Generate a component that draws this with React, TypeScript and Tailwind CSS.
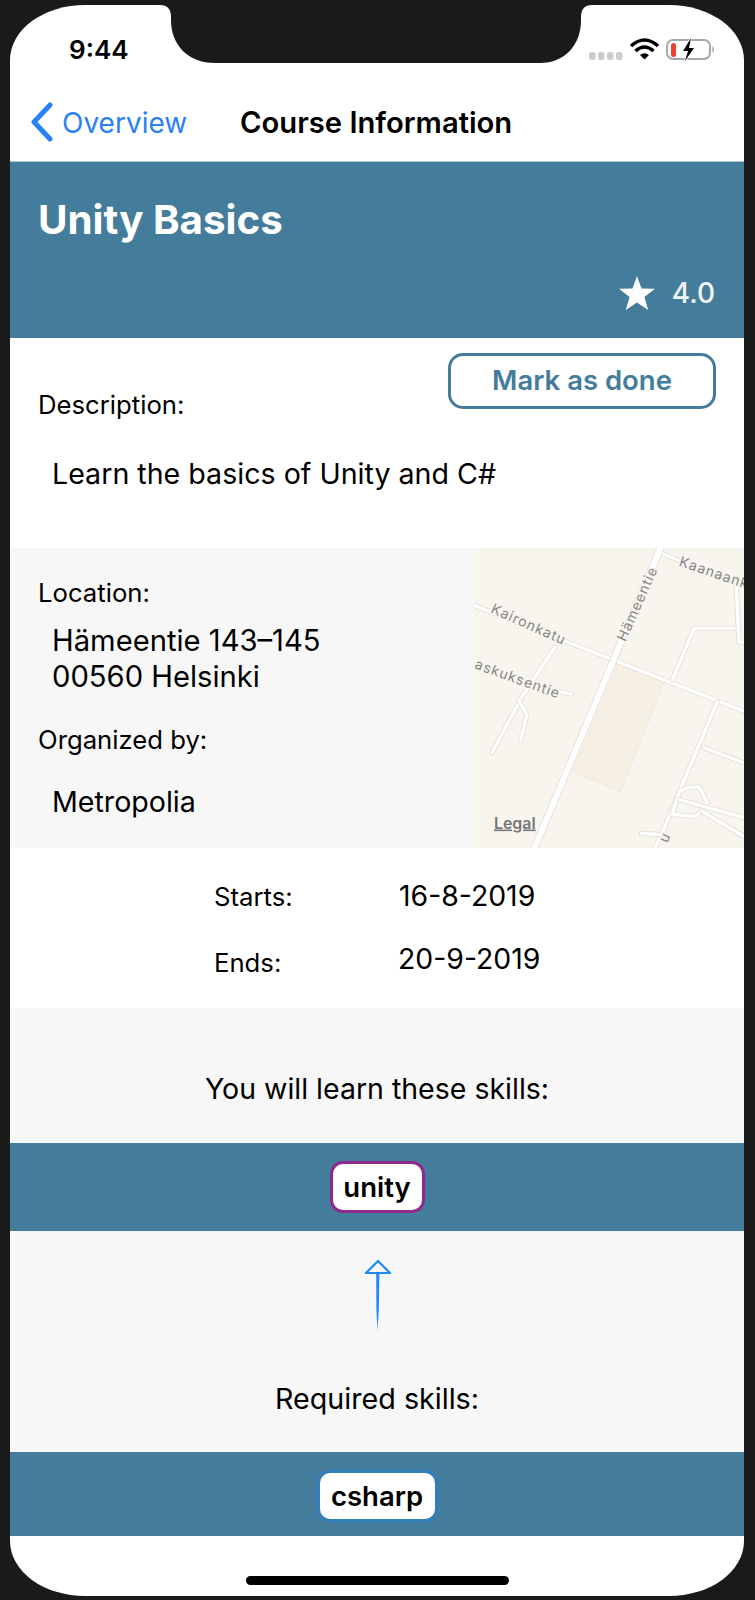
function StatusIcons() {
  return (
    <svg width="135" height="30" viewBox="0 0 135 30" className="absolute left-[575px] top-[30px]">
      {[4, 13, 22, 31].map((x) => (
        <rect key={x} x={x} y="17" width="6.5" height="8" rx="2.5" fill="#cccccc" />
      ))}
      <path d="M46 11 Q59.5 -1 73 11" fill="none" stroke="#000" strokeWidth="3.5" />
      <path d="M50.5 16 Q59.5 8 68.5 16" fill="none" stroke="#000" strokeWidth="3.5" />
      <path d="M55 20 L59.5 24.5 L64 20 Q59.5 16.5 55 20 Z" fill="#000" />
      <rect x="82" y="5" width="43" height="19" rx="6" fill="none" stroke="#a8a8a8" strokeWidth="2" />
      <rect x="86" y="8" width="5" height="14" rx="2.5" fill="#f0402f" />
      <path d="M106 3 L98 16 L103 16 L100 26 L109 13 L104 13 Z" fill="#000" stroke="#fff" strokeWidth="1.5" paintOrder="stroke" />
      <path d="M127.5 11 Q130.5 14.5 127.5 18 Z" fill="#999" />
    </svg>
  );
}

function Notch() {
  return (
    <svg width="735" height="60" viewBox="0 0 735 60" className="absolute left-0 top-0">
      <path
        d="M150 0 Q161 0 161 12 L161 15 C161 40 178 58 205 58 L530 58 C555 58 571 40 571 15 L571 12 Q571 0 582 0 Z"
        fill="#1a1a1a"
      />
    </svg>
  );
}

function Road({ d, w = 3.5 }: { d: string; w?: number }) {
  return (
    <g fill="none" strokeLinecap="round" strokeLinejoin="round">
      <path d={d} stroke="#e0dcd4" strokeWidth={w + 1.5} />
      <path d={d} stroke="#ffffff" strokeWidth={w} />
    </g>
  );
}

function MapLabel({ x, y, angle, text }: { x: number; y: number; angle: number; text: string }) {
  return (
    <text
      transform={`translate(${x} ${y}) rotate(${angle})`}
      fontSize="14"
      letterSpacing="1"
      fill="#858585"
      stroke="#f8f5ef"
      strokeWidth="2.5"
      paintOrder="stroke"
      style={{ fontFamily: "Inter, sans-serif" }}
    >
      {text}
    </text>
  );
}

function MapTile() {
  return (
    <svg viewBox="0 0 271 300" className="w-[270px] h-full shrink-0 bg-[#f8f5ef]">
      <polygon points="145,114 191,134 147,244 99,224" fill="#f5efe3" stroke="#efe9dc" />
      <Road d="M0 57 L270 163" />
      <Road d="M189 5 L206 12" />
      <Road d="M199 132 L221 80 L264 80" />
      <Road d="M263 34 L266 94 L271 94" />
      <Road d="M244 154 L189 285 L182 300" />
      <Road d="M231 200 L271 215" />
      <Road d="M199 267 L206 244 L213 240 L226 239 L234 255 L223 269 Z" />
      <Road d="M206 252 L271 270" />
      <Road d="M229 264 L271 289" />
      <Road d="M168 286 L189 287" />
      <Road d="M81 99 L48 149 L18 205" />
      <Road d="M45 152 L53 167 L47 192" />
      <Road d="M86 144 L98 146" />
      <Road d="M187 0 L61 300" w={6} />
      <MapLabel x={16} y={64} angle={24} text="Kaironkatu" />
      <MapLabel x={152} y={94} angle={-66} text="Hämeentie" />
      <MapLabel x={0} y={120} angle={20} text="askuksentie" />
      <MapLabel x={205} y={17} angle={19} text="Kaanaank" />
      <MapLabel x={194} y={296} angle={-66} text="u" />
      <text
        x="20"
        y="281"
        fontSize="16"
        fontWeight="600"
        fill="#777777"
        textDecoration="underline"
        style={{ fontFamily: "Inter, sans-serif" }}
      >
        Legal
      </text>
    </svg>
  );
}

function SkillBar({ label, pill, h }: { label: string; pill: string; h: string }) {
  return (
    <div className={`${h} shrink-0 bg-[#447c9b] flex items-center justify-center`}>
      <div className={`${pill} h-[52px] border-[3px] rounded-[13px] bg-white flex items-center justify-center text-[27.5px] font-semibold text-black`}>
        {label}
      </div>
    </div>
  );
}

export default function App() {
  return (
    <div className="w-[755px] h-[1600px] bg-[#1a1a1a] pl-[10px] pr-[11px] pt-[5px] pb-[4px] font-['Inter',sans-serif] text-black">
      <div className="relative h-full bg-white rounded-[75px/55px] overflow-hidden flex flex-col">
        <Notch />
        <StatusIcons />
        <div className="absolute left-[59px] top-[27px] text-[26px] leading-[36px] font-semibold">9:44</div>

        {/* nav bar */}
        <div className="h-[157px] shrink-0 flex items-end pb-[19px] pl-[20px] border-b border-[#b9c4ca]">
          <svg width="24" height="40" viewBox="0 0 24 40">
            <path d="M20 3 L4 20 L20 37" fill="none" stroke="#2a80f5" strokeWidth="5" strokeLinecap="round" strokeLinejoin="round" />
          </svg>
          <span className="ml-[8px] w-[178px] text-[28px] leading-[38px] text-[#2a80f5]">Overview</span>
          <span className="text-[29.2px] leading-[38px] font-semibold">Course Information</span>
        </div>

        {/* title */}
        <div className="h-[176px] shrink-0 bg-[#447c9b] flex flex-col justify-between pl-[28px] pr-[29px] pt-[33px] pb-[27px] text-white">
          <h1 className="text-[40.3px] leading-[50px] font-bold">Unity Basics</h1>
          <div className="flex items-center justify-end gap-[17px]">
            <svg width="36" height="34" viewBox="0 0 36 34">
              <path d="M18 0 L22.5 12.5 L36 12.8 L25.4 21 L29.2 34 L18 26.4 L6.8 34 L10.6 21 L0 12.8 L13.5 12.5 Z" fill="#fff" />
            </svg>
            <span className="text-[28px] leading-[36px] font-medium text-[#f0f4f7]">4.0</span>
          </div>
        </div>

        {/* description */}
        <div className="h-[210px] shrink-0 pl-[28px] pr-[28px] pt-[15px]">
          <div className="flex justify-between items-start">
            <span className="mt-[36px] text-[25.7px] leading-[32px]">Description:</span>
            <button className="w-[268px] h-[56px] border-[3px] border-[#447c9b] rounded-[15px] text-[27.5px] font-semibold text-[#447c9b]">
              Mark as done
            </button>
          </div>
          <p className="ml-[14px] mt-[33px] text-[28.6px] leading-[40px]">Learn the basics of Unity and C#</p>
        </div>

        {/* location */}
        <div className="h-[300px] shrink-0 bg-[#f7f7f7] flex">
          <div className="flex-1 pl-[28px] pt-[29px]">
            <div className="text-[25.7px] leading-[32px]">Location:</div>
            <div className="ml-[14px] mt-[14px] text-[29.2px] leading-[36px]">
              Hämeentie 143–145
              <br />
              00560 Helsinki
            </div>
            <div className="mt-[29px] text-[25.7px] leading-[32px]">Organized by:</div>
            <div className="ml-[14px] mt-[28px] text-[28.6px] leading-[36px]">Metropolia</div>
          </div>
          <MapTile />
        </div>

        {/* dates */}
        <div className="h-[160px] shrink-0 pl-[204px] pt-[29px]">
          <div className="flex items-center h-[40px]">
            <span className="w-[185px] text-[25.7px]">Starts:</span>
            <span className="text-[28.4px] -mt-[2px]">16-8-2019</span>
          </div>
          <div className="flex items-center h-[40px] mt-[26px]">
            <span className="w-[184px] text-[25.7px]">Ends:</span>
            <span className="text-[28.4px] -mt-[8px]">20-9-2019</span>
          </div>
        </div>

        {/* skills */}
        <div className="h-[135px] shrink-0 bg-[#f7f7f7] flex items-start justify-center pt-[61px] text-[28.5px] leading-[40px]">
          You will learn these skills:
        </div>
        <SkillBar label="unity" pill="w-[95px] border-[#8e2a8e] pt-[2px]" h="h-[88px]" />
        <div className="h-[221px] shrink-0 bg-[#f7f7f7] flex flex-col items-center">
          <svg width="30" height="74" viewBox="0 0 30 74" className="mt-[28px] ml-[1px]">
            <path d="M3 14 L15 2 L27 14 L2 14" fill="none" stroke="#1e88ff" strokeWidth="2.2" strokeLinejoin="round" />
            <path d="M13.2 14 L16.4 14 L15.8 50 L14.4 72 L13.4 50 Z" fill="#1e88ff" />
          </svg>
          <div className="mt-[46px] text-[28.7px] leading-[40px]">Required skills:</div>
        </div>
        <SkillBar label="csharp" pill="w-[121px] border-[#2f7fbf] mt-[3px] pt-[2px]" h="h-[84px]" />

        {/* home indicator */}
        <div className="flex-1 flex items-end justify-center pb-[11px]">
          <div className="w-[263px] h-[9px] rounded-full bg-black" />
        </div>
      </div>
    </div>
  );
}
